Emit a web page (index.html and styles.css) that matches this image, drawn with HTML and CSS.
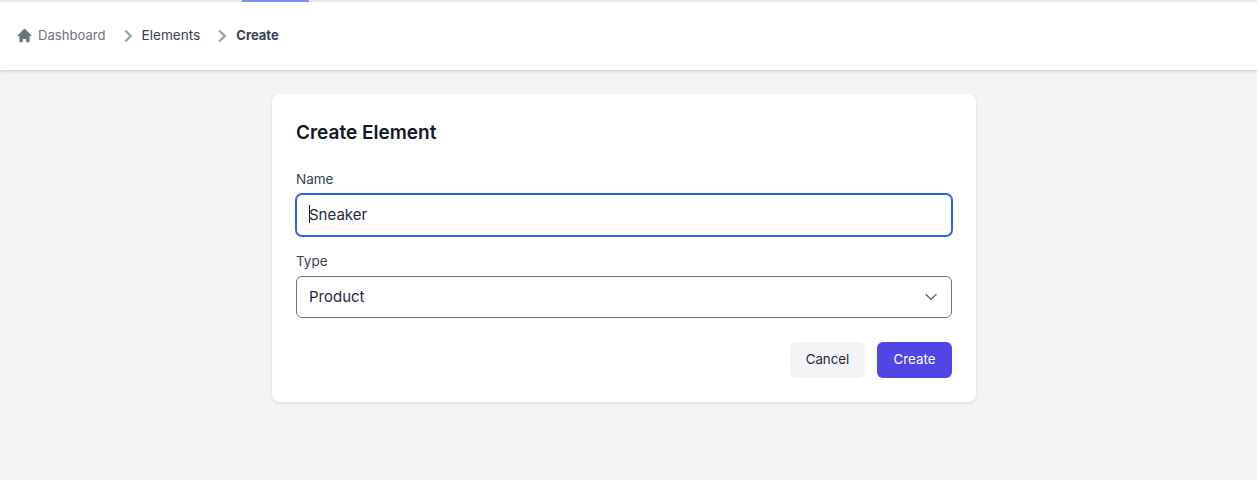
FILE: index.html
```html
<!DOCTYPE html>
<html>
<head>
    <title>Create Element</title>
    <link rel="stylesheet" href="styles.css">
</head>
<body>
    <div class="topbar">
        <div class="topbar-tab"></div>
    </div>

    <div class="header">
        <svg class="home-icon" viewBox="0 0 20 20" fill="#6b7280">
            <path d="M10.7 2.3a1 1 0 0 0-1.4 0l-7 7a1 1 0 0 0 1.4 1.4l.3-.3V17a1 1 0 0 0 1 1h2a1 1 0 0 0 1-1v-2a1 1 0 0 1 1-1h2a1 1 0 0 1 1 1v2a1 1 0 0 0 1 1h2a1 1 0 0 0 1-1v-6.600l.3.3a1 1 0 0 0 1.400-1.400l-7-7z"/>
        </svg>
        <a class="crumb crumb-home" href="#">Dashboard</a>
        <svg class="crumb-sep" viewBox="0 0 20 20" fill="none" stroke="#9ca3af" stroke-width="2.400">
            <path d="M6.200 4.500l5.500 5.500-5.500 5.500"/>
        </svg>
        <a class="crumb crumb-elements" href="#">Elements</a>
        <svg class="crumb-sep" viewBox="0 0 20 20" fill="none" stroke="#9ca3af" stroke-width="2.400">
            <path d="M6.200 4.500l5.500 5.500-5.500 5.500"/>
        </svg>
        <span class="crumb crumb-current">Create</span>
    </div>

    <div class="content">
        <div class="card">
            <h2>Create Element</h2>

            <div class="field-label">Name</div>
            <div class="field field-focus">
                <span class="caret"></span>Sneaker
            </div>

            <div class="field-label field-label-type">Type</div>
            <div class="field field-select">
                <span>Product</span>
                <svg class="chevron" viewBox="0 0 20 20" fill="none" stroke="#6b7280" stroke-width="1.600" stroke-linecap="round" stroke-linejoin="round">
                    <path d="M5 7.500l5 5 5-5"/>
                </svg>
            </div>

            <div class="actions">
                <button class="btn btn-cancel">Cancel</button>
                <button class="btn btn-create">Create</button>
            </div>
        </div>
    </div>
</body>
</html>
```

FILE: styles.css
```css
* {
    box-sizing: border-box;
}
body {
    margin: 0;
    padding: 0;
    height: 480px;
    overflow: hidden;
    background: #f3f4f6;
    font-family: Inter, "Liberation Sans", sans-serif;
    color: #111827;
}
.topbar {
    height: 2px;
    background: #e5e7eb;
    position: relative;
    z-index: 1;
}
.topbar-tab {
    width: 67px;
    height: 2px;
    margin-left: 242px;
    background: #818cf8;
}
.header {
    display: flex;
    align-items: center;
    height: 68px;
    padding-left: 16px;
    padding-bottom: 2px;
    background: #fff;
    box-shadow: 0 1px 3px rgba(0, 0, 0, 0.2);
}
.home-icon {
    width: 17px;
    height: 17px;
    margin-right: 5px;
}
.crumb {
    font-size: 13.1px;
    line-height: 20px;
    color: #374151;
    text-decoration: none;
}
.crumb-home {
    color: #6b7280;
}
.crumb-elements {
    font-size: 13.6px;
}
.crumb-current {
    font-size: 13px;
    font-weight: 700;
}
.crumb-sep {
    width: 20px;
    height: 20px;
    margin: 2px 3px 0 13px;
}
.content {
    display: flex;
    justify-content: center;
    padding-top: 24px;
    padding-right: 9px;
}
.card {
    width: 704px;
    height: 308px;
    padding: 25px 24px 24px;
    background: #fff;
    border-radius: 8px;
    box-shadow: 0 1px 3px rgba(0, 0, 0, 0.12);
}
h2 {
    margin: 0;
    font-size: 19px;
    line-height: 28px;
    font-weight: 600;
}
.field-label {
    margin-top: 22px;
    font-size: 13.5px;
    line-height: 20px;
    color: #374151;
}
.field-label-type {
    margin-top: 15px;
}
.field {
    display: flex;
    align-items: center;
    height: 42px;
    margin-top: 5px;
    padding: 0 12px 2px;
    font-size: 15px;
    background: #fff;
    border: 1px solid #6b7280;
    border-radius: 6px;
    color: #1f2937;
}
.field-focus {
    border-color: #2563eb;
    box-shadow: 0 0 0 1px #2563eb;
}
.caret {
    width: 1px;
    height: 18px;
    margin-right: -1px;
    background: #111827;
}
.field-select {
    justify-content: space-between;
}
.chevron {
    width: 20px;
    height: 20px;
    margin-top: 2px;
    margin-right: -2px;
}
.actions {
    display: flex;
    justify-content: flex-end;
    gap: 12px;
    margin-top: 24px;
}
.btn {
    height: 36px;
    width: 75px;
    padding: 0 0 2px;
    border: 0;
    border-radius: 6px;
    font-family: inherit;
    font-size: 13.3px;
}
.btn-cancel {
    background: #f3f4f6;
    color: #1f2937;
}
.btn-create {
    background: #4f46e5;
    color: #fff;
}
```
